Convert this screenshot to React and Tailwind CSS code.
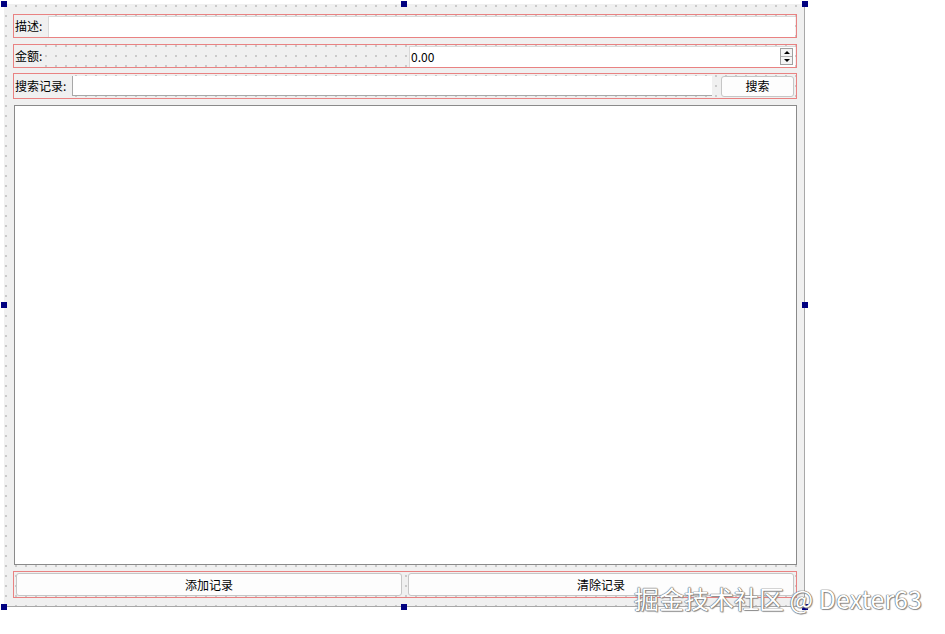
import React from "react";

const font = { fontFamily: "'Noto Sans CJK SC', 'Liberation Sans', sans-serif" };

function Handle({ className }) {
  return <div className={"absolute w-[6px] h-[6px] bg-[#000080] " + className} />;
}

function Button({ children, className = "" }) {
  return (
    <div
      className={
        "flex items-center justify-center rounded-[3px] border border-[#c6c6c6] bg-[#fdfdfd] text-[12px] text-black " +
        className
      }
    >
      {children}
    </div>
  );
}

export default function App() {
  return (
    <div className="relative min-h-screen bg-white pl-[4px] pt-[4px]" style={font}>
      <div className="relative w-[801px] h-[603px] border-r border-b border-[#a8a8a8] bg-[#f0f0f0] bg-[image:radial-gradient(circle,#b4b4b4_0.6px,transparent_0.9px)] bg-size-[10px_10px] bg-position-[-3px_-3px] pl-[9px] pt-[10px]">
        {/* row 1 */}
        <div className="flex items-center h-[24px] w-[784px] border border-[#e98282] pr-[1px]">
          <span className="h-full flex items-center pl-[1px] pr-[6px] bg-[#f0f0f0] text-[12px] text-black">描述:</span>
          <div className="flex-1 h-[21px] bg-white border-t border-l border-[#d9d9d9]" />
        </div>

        {/* row 2 */}
        <div className="mt-[6px] flex items-center h-[24px] w-[784px] border border-[#e98282] pr-[1px]">
          <span className="h-full flex items-center pl-[1px] pr-[2px] bg-[#f0f0f0] text-[12px] text-black">金额:</span>
          <div className="ml-auto flex items-center w-[386px] h-[21px] bg-white border-t border-l border-[#d9d9d9]">
            <span className="pl-[1px] text-[12px] text-black">0.00</span>
            <div className="ml-auto mr-[2px] flex flex-col w-[13px] h-[17px] border border-[#a0a0a0] bg-[#f4f4f4]">
              <div className="flex-1 flex items-center justify-center border-b border-[#b0b0b0]">
                <div className="w-0 h-0 border-x-[3px] border-x-transparent border-b-[3px] border-b-black" />
              </div>
              <div className="flex-1 flex items-center justify-center">
                <div className="w-0 h-0 border-x-[3px] border-x-transparent border-t-[3px] border-t-black" />
              </div>
            </div>
          </div>
        </div>

        {/* row 3 */}
        <div className="mt-[5px] flex items-center h-[26px] w-[784px] border border-[#e98282] pr-[2px]">
          <span className="h-full flex items-center pl-[1px] pr-[6px] bg-[#f0f0f0] text-[12px] text-black">搜索记录:</span>
          <div className="w-[640px] h-[20px] bg-white border-b border-l border-[#a8a8a8]" />
          <Button className="ml-auto w-[73px] h-[21px]">搜索</Button>
        </div>

        {/* list */}
        <div className="mt-[6px] ml-[1px] w-[783px] h-[460px] bg-white border border-[#8a8a8a]" />

        {/* row 4 */}
        <div className="mt-[6px] flex items-center justify-between h-[27px] w-[784px] border border-[#e98282] px-[2px]">
          <Button className="w-[386px] h-[23px]">添加记录</Button>
          <Button className="w-[386px] h-[23px]">清除记录</Button>
        </div>

        <Handle className="-left-[3px] -top-[3px]" />
        <Handle className="left-[397px] -top-[3px]" />
        <Handle className="-right-[4px] -top-[3px]" />
        <Handle className="-left-[3px] top-[298px]" />
        <Handle className="-right-[4px] top-[298px]" />
        <Handle className="-left-[3px] -bottom-[4px]" />
        <Handle className="left-[397px] -bottom-[4px]" />
        <Handle className="-right-[4px] -bottom-[4px]" />
      </div>

      <div className="absolute left-[634px] top-[586px] text-[25px] leading-none text-white [text-shadow:0_0_1px_#666,0_0_1px_#666,0_0_1px_#666,1px_1px_1px_#999] whitespace-nowrap">
        掘金技术社区 @ Dexter63
      </div>
    </div>
  );
}
